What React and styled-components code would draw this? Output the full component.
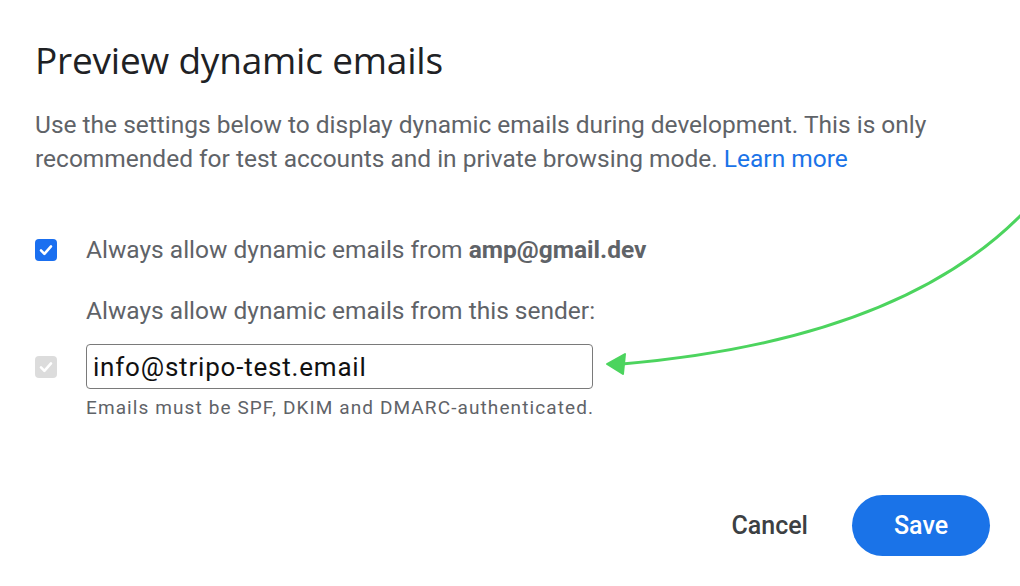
import React from 'react';
import styled, { createGlobalStyle } from 'styled-components';

const GlobalStyle = createGlobalStyle`
  html, body {
    margin: 0;
    padding: 0;
    background: #ffffff;
  }
  body {
    font-family: Roboto, "Liberation Sans", sans-serif;
    -webkit-font-smoothing: antialiased;
  }
`;

const Page = styled.div`
  position: relative;
  width: 1020px;
  height: 586px;
  overflow: hidden;
  background: #ffffff;
`;

const Dialog = styled.div`
  display: flex;
  flex-direction: column;
  padding: 38px 30px 0 35px;
`;

const Title = styled.h1`
  margin: 0;
  font-family: "Open Sans", Roboto, sans-serif;
  font-weight: 400;
  font-size: 37px;
  line-height: 44px;
  color: #202124;
  letter-spacing: -0.2px;
`;

const Description = styled.p`
  margin: 26px 0 0;
  font-size: 24.5px;
  line-height: 34px;
  color: #5f6368;
  max-width: 920px;
`;

const Link = styled.a`
  color: #1a73e8;
  text-decoration: none;
`;

const Row = styled.div`
  display: flex;
  align-items: center;
  gap: 29px;
  margin-top: ${(p) => p.$gap || 0}px;
`;

const Indent = styled.div`
  padding-left: 51px;
  margin-top: ${(p) => p.$gap || 0}px;
`;

const Box = styled.span`
  flex: none;
  width: 22px;
  height: 22px;
  border-radius: 4px;
  background: ${(p) => (p.$disabled ? '#dcdcdc' : '#1a6ff0')};
  display: flex;
  align-items: center;
  justify-content: center;
`;

const Label = styled.span`
  font-size: 24.5px;
  line-height: 28px;
  color: #5f6368;

  b {
    font-weight: 700;
  }
`;

const Field = styled.input`
  box-sizing: border-box;
  width: 507px;
  height: 45px;
  padding: 0 6px;
  border: 1px solid #7a7a7a;
  border-radius: 4px;
  font-family: Roboto, "Liberation Sans", sans-serif;
  font-size: 26px;
  letter-spacing: 0.8px;
  color: #111111;
  outline: none;
  background: #fff;
`;

const Hint = styled.div`
  font-size: 19px;
  letter-spacing: 1.1px;
  line-height: 22px;
  color: #5f6368;
`;

const Footer = styled.div`
  display: flex;
  justify-content: flex-end;
  align-items: center;
  gap: 24px;
  margin-top: 76px;
`;

const Button = styled.button`
  height: 61px;
  border: none;
  border-radius: 31px;
  padding: 0 ${(p) => (p.$primary ? 40 : 20)}px;
  min-width: ${(p) => (p.$primary ? 138 : 0)}px;
  background: ${(p) => (p.$primary ? '#1a73e8' : 'transparent')};
  color: ${(p) => (p.$primary ? '#ffffff' : '#3c4043')};
  font-family: Roboto, "Liberation Sans", sans-serif;
  font-size: 25px;
  font-weight: 500;
  cursor: pointer;
`;

const Annotation = styled.svg`
  position: absolute;
  left: 0;
  top: 0;
  pointer-events: none;
`;

function Checkbox({ disabled }) {
  return (
    <Box $disabled={disabled}>
      <svg width="16" height="16" viewBox="0 0 16 16">
        <path
          d="M3 8.4 L6.4 11.8 L13 4.4"
          fill="none"
          stroke="#ffffff"
          strokeWidth="2.6"
          strokeLinecap="round"
          strokeLinejoin="round"
        />
      </svg>
    </Box>
  );
}

function App() {
  return (
    <Page>
      <GlobalStyle />
      <Dialog>
        <Title>Preview dynamic emails</Title>
        <Description>
          Use the settings below to display dynamic emails during development. This is only
          recommended for test accounts and in private browsing mode. <Link href="#">Learn more</Link>
        </Description>

        <Row $gap={60}>
          <Checkbox />
          <Label>
            Always allow dynamic emails from <b>amp@gmail.dev</b>
          </Label>
        </Row>

        <Indent $gap={33}>
          <Label>Always allow dynamic emails from this sender:</Label>
        </Indent>

        <Row $gap={19}>
          <Checkbox disabled />
          <Field defaultValue="info@stripo-test.email" />
        </Row>

        <Indent $gap={8}>
          <Hint>Emails must be SPF, DKIM and DMARC-authenticated.</Hint>
        </Indent>

        <Footer>
          <Button>Cancel</Button>
          <Button $primary>Save</Button>
        </Footer>
      </Dialog>

      <Annotation width="1020" height="586" viewBox="0 0 1020 586">
        <path
          d="M1024 212 Q 900 340 622 364"
          fill="none"
          stroke="#4cd45e"
          strokeWidth="3"
          strokeLinecap="round"
        />
        <path d="M607 364 L625 354 L623 374 Z" fill="#4cd45e" stroke="#4cd45e" strokeWidth="2" strokeLinejoin="round" />
      </Annotation>
    </Page>
  );
}

export default App;
